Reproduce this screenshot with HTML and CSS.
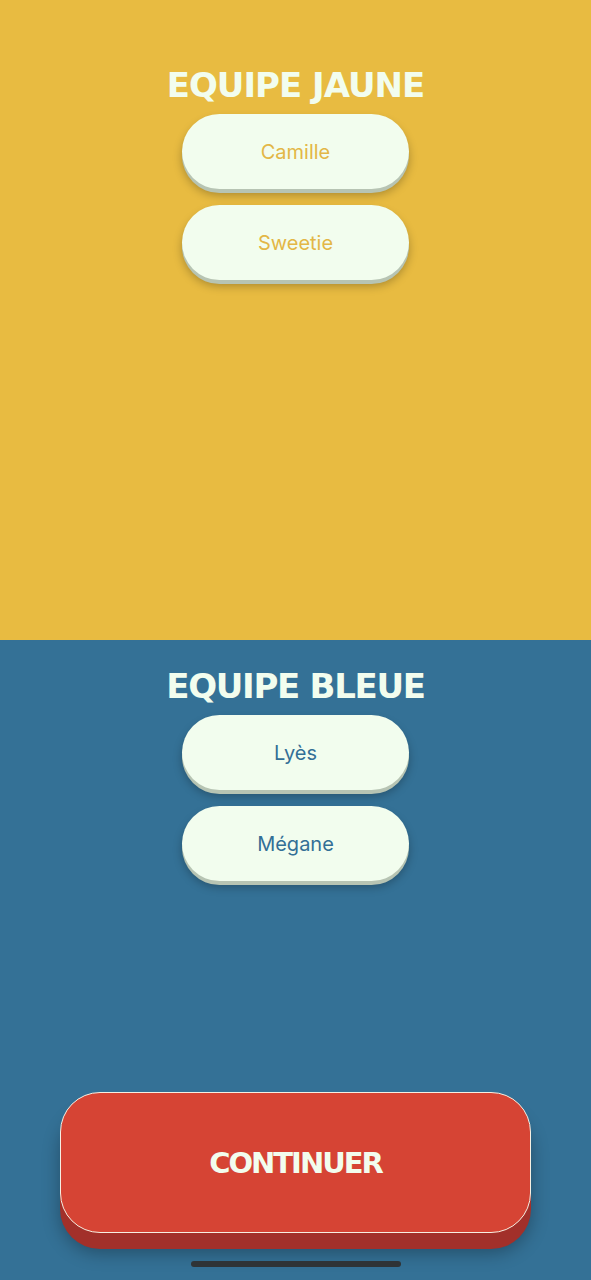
FILE: index.html
```html
<!DOCTYPE html>
<html lang="fr">
<head>
    <meta charset="UTF-8">
    <meta name="viewport" content="width=device-width, initial-scale=1.0">
    <title>Equipes</title>
    <link rel="stylesheet" href="styles.css">
</head>
<body>
    <div id="screen">
        <section class="team team-yellow">
            <h1 class="team-title">EQUIPE JAUNE</h1>
            <div class="players">
                <button class="player">Camille</button>
                <button class="player">Sweetie</button>
            </div>
        </section>
        <section class="team team-blue">
            <h1 class="team-title">EQUIPE BLEUE</h1>
            <div class="players">
                <button class="player">Lyès</button>
                <button class="player">Mégane</button>
            </div>
            <div class="footer">
                <button class="continue-btn">CONTINUER</button>
                <div class="home-indicator"></div>
            </div>
        </section>
    </div>
</body>
</html>
```

FILE: styles.css
```css
:root {
    --yellow: #e8bb41;
    --blue: #347196;
    --pill: #f2fdee;
    --pill-edge: #b7c4b3;
    --red: #d64434;
    --red-edge: #a2302a;
    --title-color: #f2fdee;
}

* {
    margin: 0;
    padding: 0;
    box-sizing: border-box;
}

body {
    font-family: 'Inter', 'Noto Sans', sans-serif;
    width: 591px;
    height: 1280px;
    overflow: hidden;
}

#screen {
    display: flex;
    flex-direction: column;
    height: 1280px;
}

.team {
    display: flex;
    flex-direction: column;
    align-items: center;
}

.team-yellow {
    background-color: var(--yellow);
    height: 640px;
    padding-top: 68px;
}

.team-blue {
    background-color: var(--blue);
    flex: 1;
    padding-top: 29px;
}

.team-title {
    font-family: 'DejaVu Sans', sans-serif;
    font-weight: 700;
    font-size: 34px;
    line-height: 34px;
    letter-spacing: -1px;
    color: var(--title-color);
    margin-bottom: 12px;
}

.team-blue .team-title {
    letter-spacing: -1.3px;
}

.players {
    display: flex;
    flex-direction: column;
    gap: 16px;
}

.player {
    width: 227px;
    height: 75px;
    border: none;
    border-radius: 38px;
    background-color: var(--pill);
    font-family: 'Inter', 'Noto Sans', sans-serif;
    font-size: 20px;
    box-shadow: 0 4px 0 var(--pill-edge), 0 6px 10px rgba(0, 0, 0, 0.28);
}

.team-yellow .player {
    color: #e3b746;
}

.team-blue .player {
    color: #336f96;
}

.footer {
    margin-top: auto;
    display: flex;
    flex-direction: column;
    align-items: center;
    padding-bottom: 13px;
}

.continue-btn {
    width: 471px;
    height: 141px;
    border: 1.5px solid #f6efe2;
    border-radius: 40px;
    background-color: var(--red);
    color: var(--title-color);
    font-family: 'DejaVu Sans', sans-serif;
    font-weight: 700;
    font-size: 29px;
    letter-spacing: -2px;
    box-shadow: 0 16px 0 var(--red-edge), 0 20px 18px rgba(0, 0, 0, 0.3);
    margin-bottom: 28px;
}

.home-indicator {
    width: 210px;
    height: 6px;
    border-radius: 3px;
    background-color: #2f3336;
}
```
